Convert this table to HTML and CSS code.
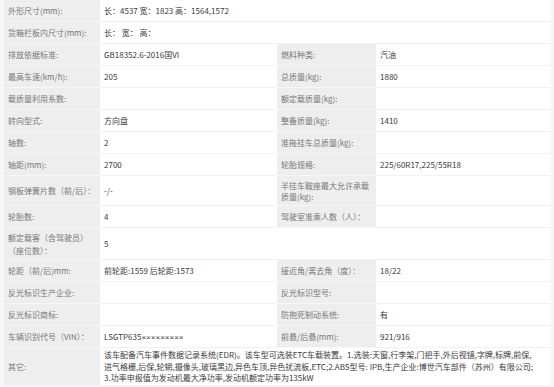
FILE: index.html
```html
<!DOCTYPE html>
<html lang="zh-CN">
<head>
<meta charset="utf-8">
<title>车辆参数</title>
<link rel="stylesheet" href="styles.css">
</head>
<body>
<table class="spec">
  <colgroup>
    <col class="c-l1"><col class="c-v1"><col class="c-l2"><col class="c-v2">
  </colgroup>
  <tr class="r1">
    <td class="lbl">外形尺寸(mm):</td>
    <td class="val" colspan="3">长：4537 宽：1823 高：1564,1572</td>
  </tr>
  <tr class="r1">
    <td class="lbl">货箱栏板内尺寸(mm):</td>
    <td class="val" colspan="3">长：&nbsp;宽：&nbsp;高：</td>
  </tr>
  <tr class="r1">
    <td class="lbl">排放依据标准:</td>
    <td class="val">GB18352.6-2016国VI</td>
    <td class="lbl">燃料种类:</td>
    <td class="val">汽油</td>
  </tr>
  <tr class="r1">
    <td class="lbl">最高车速(km/h):</td>
    <td class="val">205</td>
    <td class="lbl">总质量(kg):</td>
    <td class="val">1880</td>
  </tr>
  <tr class="r1">
    <td class="lbl">载质量利用系数:</td>
    <td class="val"></td>
    <td class="lbl">额定载质量(kg):</td>
    <td class="val"></td>
  </tr>
  <tr class="r1">
    <td class="lbl">转向型式:</td>
    <td class="val">方向盘</td>
    <td class="lbl">整备质量(kg):</td>
    <td class="val">1410</td>
  </tr>
  <tr class="r1">
    <td class="lbl">轴数:</td>
    <td class="val">2</td>
    <td class="lbl">准拖挂车总质量(kg):</td>
    <td class="val"></td>
  </tr>
  <tr class="r1">
    <td class="lbl">轴距(mm):</td>
    <td class="val">2700</td>
    <td class="lbl">轮胎规格:</td>
    <td class="val">225/60R17,225/55R18</td>
  </tr>
  <tr class="r2">
    <td class="lbl">钢板弹簧片数（前/后）：</td>
    <td class="val">-/-</td>
    <td class="lbl">半挂车鞍座最大允许承载质量(kg):</td>
    <td class="val"></td>
  </tr>
  <tr class="r1">
    <td class="lbl">轮胎数:</td>
    <td class="val">4</td>
    <td class="lbl">驾驶室准乘人数（人）：</td>
    <td class="val"></td>
  </tr>
  <tr class="r3">
    <td class="lbl tall">额定载客（含驾驶员）（座位数）：</td>
    <td class="val" colspan="3">5</td>
  </tr>
  <tr class="r1">
    <td class="lbl">轮距（前/后)mm:</td>
    <td class="val">前轮距:1559 后轮距:1573</td>
    <td class="lbl">接近角/离去角（度）：</td>
    <td class="val">18/22</td>
  </tr>
  <tr class="r1">
    <td class="lbl">反光标识生产企业:</td>
    <td class="val"></td>
    <td class="lbl">反光标识型号:</td>
    <td class="val"></td>
  </tr>
  <tr class="r1">
    <td class="lbl">反光标识商标:</td>
    <td class="val"></td>
    <td class="lbl">防抱死制动系统:</td>
    <td class="val">有</td>
  </tr>
  <tr class="r1">
    <td class="lbl">车辆识别代号（VIN）：</td>
    <td class="val">LSGTP635<span class="mask">×××××××××</span></td>
    <td class="lbl">前悬/后悬(mm):</td>
    <td class="val">921/916</td>
  </tr>
  <tr class="r4">
    <td class="lbl">其它:</td>
    <td class="val para" colspan="3">该车配备汽车事件数据记录系统(EDR)。该车型可选装ETC车载装置。1.选装:天窗,行李架,门把手,外后视镜,字牌,标牌,前保,<br>进气格栅,后保,轮辋,摄像头,玻璃黑边,异色车顶,异色扰流板,ETC;2.ABS型号: IPB,生产企业:博世汽车部件（苏州）有限公司;<br>3.功率申报值为发动机最大净功率,发动机额定功率为135kW</td>
  </tr>
</table>
</body>
</html>
```

FILE: styles.css
```css
html, body {
  margin: 0;
  padding: 0;
  background: #f7f7f9;
}

body {
  font-family: "Noto Sans CJK SC", "Liberation Sans", sans-serif;
  font-size: 8px;
  line-height: 11px;
  color: #444;
  overflow: hidden;
}

.spec {
  margin-left: 4px;
  width: 546px;
  border-collapse: collapse;
  table-layout: fixed;
}

.c-l1 { width: 96px; }
.c-v1 { width: 177px; }
.c-l2 { width: 99px; }
.c-v2 { width: 174px; }

.spec td {
  border-bottom: 1px solid #f1f1f3;
  padding: 0 4px;
  vertical-align: middle;
  white-space: nowrap;
}

.lbl {
  background: #eeeeee;
  color: #777;
  border-bottom-color: #f7f7f7 !important;
  white-space: normal !important;
}

.val {
  background: #ffffff;
  color: #3a3a3a;
}

.mask {
  font-family: "Liberation Sans", sans-serif;
}

.r1 td { height: 21px; }
.r2 td { height: 29px; }
.r3 td { height: 31px; }
.r4 td { height: 37px; }

.tall { line-height: 13px; }

.para {
  white-space: nowrap !important;
  line-height: 11.5px;
  padding-right: 2px;
}
```
